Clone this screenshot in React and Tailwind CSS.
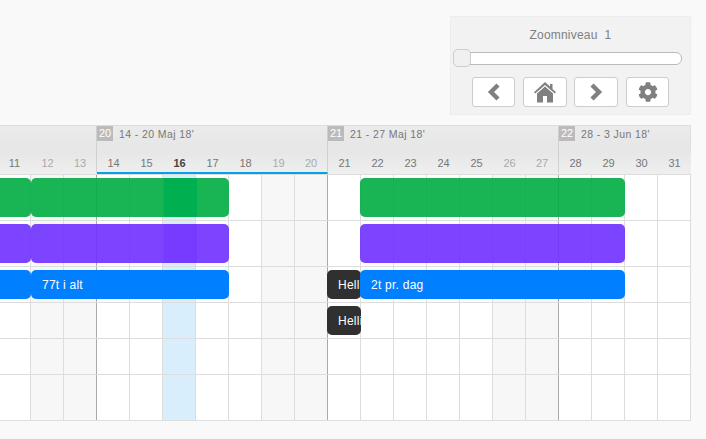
import React from "react";
import { FaCog } from "react-icons/fa";

const days = [11, 12, 13, 14, 15, 16, 17, 18, 19, 20, 21, 22, 23, 24, 25, 26, 27, 28, 29, 30, 31];
const weekend = [12, 13, 19, 20, 26, 27];
const weekEnd = [13, 20, 27];
const today = 16;

const weeks = [
  { no: null, width: "w-[99px]" },
  { no: 20, label: "14 - 20 Maj 18'", width: "w-[231px]" },
  { no: 21, label: "21 - 27 Maj 18'", width: "w-[231px]" },
  { no: 22, label: "28 - 3 Jun 18'", width: "w-[132px]" },
];

const dayColor = (d) => {
  if (d === today) return "text-[#444] font-bold";
  if (weekend.includes(d)) return "text-[#aaa]";
  return "text-[#777]";
};

const cellBg = (d) => {
  if (d === today) return "bg-[#d9eefc]";
  if (weekend.includes(d)) return "bg-[#f7f7f7]";
  return "bg-white";
};

const Bar = ({ className, children, todayClass }) => (
  <div className={`absolute flex items-center overflow-hidden rounded-[5px] ${className}`}>
    {todayClass && <div className={`absolute top-0 bottom-0 left-[133px] w-[33px] ${todayClass}`} />}
    {children && <span className="relative pl-[11px] text-[12px] tracking-[0.25px] whitespace-nowrap text-white">{children}</span>}
  </div>
);

const Row = ({ height, children }) => (
  <div className={`relative flex ${height} border-b border-[#ddd]`}>
    {days.map((d) => (
      <div
        key={d}
        className={`w-[33px] shrink-0 border-r ${cellBg(d)} ${weekEnd.includes(d) ? "border-[#aaa]" : "border-[#ddd]"}`}
      />
    ))}
    {children}
  </div>
);

const NavButton = ({ width, children }) => (
  <button className={`flex h-[30px] ${width} items-center justify-center rounded-[3px] border border-[#ccc] bg-white text-[#808080]`}>
    {children}
  </button>
);

const Chevron = ({ points }) => (
  <svg width="14" height="18" viewBox="0 0 14 18" fill="none">
    <polyline points={points} stroke="#808080" strokeWidth="4.4" strokeLinecap="butt" strokeLinejoin="miter" />
  </svg>
);

const HomeIcon = () => (
  <svg width="22" height="21" viewBox="0 0 22 21" fill="#808080">
    <path d="M11 0 L16 4.6 V2 H18.5 V6.9 L22 10.2 L20.8 11.6 L11 3 L1.2 11.6 L0 10.2 Z" />
    <path d="M11 4.6 L19 11.6 V20.5 H13 V14 H9 V20.5 H3 V11.6 Z" />
  </svg>
);

export default function App() {
  return (
    <div className="h-[439px] overflow-hidden bg-[#f9f9f9] font-['Liberation_Sans',Arial,sans-serif]">
      {/* Zoom panel */}
      <div className="ml-[450px] h-[125px] pt-[16px]">
        <div className="h-[99px] w-[241px] border border-[#ececec] bg-[#f2f2f2] pt-[10px]">
          <div className="text-center text-[12px] leading-[16px] tracking-[0.2px] text-[#808080]">Zoomniveau&nbsp; 1</div>
          <div className="relative mx-[2px] mt-[9px] h-[13px] w-[229px] rounded-[6px] border border-[#bbb] bg-white">
            <div className="absolute top-[-4px] left-[-1px] h-[18px] w-[18px] rounded-[5px] border border-[#ccc] bg-[#f0f0f0]" />
          </div>
          <div className="mt-[12px] flex pl-[21px]">
            <NavButton width="w-[43px]"><Chevron points="11,2 4,9 11,16" /></NavButton>
            <div className="ml-[8px]"><NavButton width="w-[44px]"><HomeIcon /></NavButton></div>
            <div className="ml-[7px]"><NavButton width="w-[44px]"><Chevron points="3,2 10,9 3,16" /></NavButton></div>
            <div className="ml-[8px]"><NavButton width="w-[43px]"><FaCog size={20} /></NavButton></div>
          </div>
        </div>
      </div>

      {/* Timeline */}
      <div className="ml-[-2px] w-[693px]">
        <div className="h-[50px] border-y border-[#ddd] bg-gradient-to-b from-[#ebebeb] via-[#e6e6e6] to-[#efefef]">
          <div className="flex h-[24px]">
            {weeks.map((w, i) => (
              <div key={i} className={`${w.width} shrink-0 ${i < 3 ? "border-r border-[#d0d0d0]" : "border-r border-[#ddd]"}`}>
                {w.no && (
                  <div className="flex items-start">
                    <span className="h-[15px] w-[16px] bg-[#bbb] text-center text-[11px] leading-[15px] text-white">{w.no}</span>
                    <span className="ml-[6px] text-[10.5px] leading-[17px] tracking-[0.4px] text-[#777]">{w.label}</span>
                  </div>
                )}
              </div>
            ))}
          </div>
          <div className="flex h-[24px]">
            {days.map((d) => (
              <div
                key={d}
                className={`flex w-[33px] shrink-0 items-center justify-center border-b-2 pt-[5px] text-[11px] ${dayColor(d)} ${
                  d >= 14 && d <= 20 ? "border-[#00a3e8]" : "border-transparent"
                } ${weekEnd.includes(d) ? "border-r border-r-[#d0d0d0]" : ""}`}
              >
                {d}
              </div>
            ))}
          </div>
        </div>

        <Row height="h-[46px]">
          <Bar className="top-[3px] left-[-10px] h-[39px] w-[43px] bg-[#00ad43]/90" />
          <Bar className="top-[3px] left-[33px] h-[39px] w-[198px] bg-[#00ad43]/90" todayClass="bg-[#00b050]" />
          <Bar className="top-[3px] left-[362px] h-[39px] w-[265px] bg-[#00ad43]/90" />
        </Row>
        <Row height="h-[46px]">
          <Bar className="top-[3px] left-[-10px] h-[39px] w-[43px] bg-[#6f30ff]/90" />
          <Bar className="top-[3px] left-[33px] h-[39px] w-[198px] bg-[#6f30ff]/90" todayClass="bg-[#6f30ff]/40" />
          <Bar className="top-[3px] left-[362px] h-[39px] w-[265px] bg-[#6f30ff]/90" />
        </Row>
        <Row height="h-[36px]">
          <Bar className="top-[3px] left-[-10px] h-[29px] w-[43px] bg-[#0080ff]" />
          <Bar className="top-[3px] left-[33px] h-[29px] w-[198px] bg-[#0080ff]">77t i alt</Bar>
          <Bar className="top-[3px] left-[329px] h-[29px] w-[34px] bg-[#303030]">Helligdag</Bar>
          <Bar className="top-[3px] left-[362px] h-[29px] w-[265px] bg-[#0080ff]">2t pr. dag</Bar>
        </Row>
        <Row height="h-[36px]">
          <Bar className="top-[3px] left-[329px] h-[29px] w-[34px] bg-[#303030]">Helligdag</Bar>
        </Row>
        <Row height="h-[36px]" />
        <Row height="h-[46px]" />
      </div>
    </div>
  );
}
